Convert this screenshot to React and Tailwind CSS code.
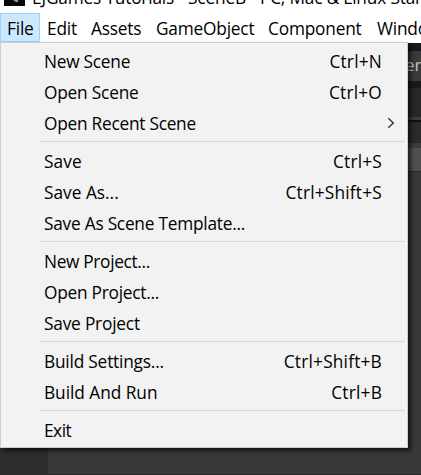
const sections = [
  [
    { label: 'New Scene', keys: 'Ctrl+N', track: 'tracking-[-0.25px]' },
    { label: 'Open Scene', keys: 'Ctrl+O', track: 'tracking-[-0.2px]' },
    { label: 'Open Recent Scene', submenu: true, track: 'tracking-[-0.25px]' },
  ],
  [
    { label: 'Save', keys: 'Ctrl+S', track: 'tracking-[0.1px]' },
    { label: 'Save As...', keys: 'Ctrl+Shift+S', track: 'tracking-[0px]' },
    { label: 'Save As Scene Template...', track: 'tracking-[-0.24px]' },
  ],
  [
    { label: 'New Project...', track: 'tracking-[-0.33px]' },
    { label: 'Open Project...', track: 'tracking-[-0.25px]' },
    { label: 'Save Project', track: 'tracking-[-0.2px]' },
  ],
  [
    { label: 'Build Settings...', keys: 'Ctrl+Shift+B', track: 'tracking-[-0.2px]' },
    { label: 'Build And Run', keys: 'Ctrl+B', track: 'tracking-[-0.04px]' },
  ],
  [{ label: 'Exit', track: 'tracking-[-0.5px]' }],
];

const tabs = [
  { label: 'File', width: 'w-10', active: true },
  { label: 'Edit', width: 'w-[44px]' },
  { label: 'Assets', width: 'w-[65px]' },
  { label: 'GameObject', width: 'w-[112px]' },
  { label: 'Component', width: 'w-[109px]' },
  { label: 'Window', width: 'w-[80px]' },
];

function Row({ label, keys, submenu, track }) {
  return (
    <div className="flex h-[31px] items-center justify-between pt-px pl-[43px] pr-[25px]">
      <span className={track}>{label}</span>
      {keys && <span className="tracking-[0.2px]">{keys}</span>}
      {submenu && (
        <svg className="-mr-[13px] mb-[3px] h-3 w-2" viewBox="0 0 8 12" fill="none" stroke="#333" strokeWidth="1.4">
          <path d="M1.3 1.2 6.3 6 1.3 10.8" />
        </svg>
      )}
    </div>
  );
}

function Editor() {
  return (
    <div className="relative h-[432px] bg-[#383838]">
      <div className="flex flex-col">
        <div className="h-2 bg-[#191919]" />
        <div className="flex h-[30px] items-center justify-end overflow-hidden bg-[#3a3a3a] text-[#c4c4c4]">
          <span className="mt-[-3px] w-[16px] shrink-0 whitespace-nowrap text-[17px] leading-none">er</span>
        </div>
        <div className="h-[7px] bg-[#191919]" />
        <div className="h-[29px] bg-[#282828]" />
        <div className="h-[3px] bg-[#3c3c3c]" />
        <div className="h-[2px] bg-[#101010]" />
        <div className="h-[21px] bg-[#2a2a2a]" />
        <div className="h-[5px] bg-[#3c3c3c]" />
        <div className="h-[23px] bg-[#4f4f4f]" />
        <div className="h-px bg-[#282828]" />
        <div className="flex h-[302px]">
          <div className="w-12 bg-[#2d2d2d]" />
          <div className="flex-1 bg-[#383838]" />
        </div>
        <div className="h-px bg-[#292929]" />
      </div>
      <div className="absolute left-0 top-[-1px] h-[406px] w-[408px] border border-[#cccccc] bg-[#f2f2f2] pt-[3px] text-black shadow-[3px_3px_4px_rgba(0,0,0,0.6)]">
        {sections.map((rows, i) => (
          <div key={i}>
            {i > 0 && (
              <div className="h-[7px] pl-[39px] pr-[2px] pt-[2px]">
                <div className="h-px bg-[#d7d7d7]" />
              </div>
            )}
            {rows.map((row) => (
              <Row key={row.label} {...row} />
            ))}
          </div>
        ))}
      </div>
    </div>
  );
}

export default function App() {
  return (
    <div className="h-[475px] w-[421px] overflow-hidden whitespace-nowrap bg-white font-['Open_Sans','Noto_Sans',sans-serif] text-[17.3px] font-normal leading-6 text-black">
      <div className="flex h-[13px] items-end overflow-hidden">
        <svg className="mb-[7px] ml-1 h-[6px] w-[21px] shrink-0" viewBox="0 0 21 6">
          <path fill="#080808" d="M0 0h21v6H0z" />
          <path fill="#999" d="M9 0h5v2h-2z" />
        </svg>
        <span className="mb-[3px] ml-[7px] tracking-[-0.18px]">EJGames Tutorials - SceneB - PC, Mac &amp; Linux Standalone</span>
      </div>
      <div className="flex h-[30px] pb-px">
        {tabs.map((tab) => (
          <div
            key={tab.label}
            className={`${tab.width} flex shrink-0 items-center pl-[7px] pt-[2px] tracking-[-0.2px] ${tab.active ? 'bg-[#cce8ff] outline -outline-offset-1 outline-[#99d1ff]' : ''}`}
          >
            {tab.label}
          </div>
        ))}
      </div>
      <Editor />
    </div>
  );
}
